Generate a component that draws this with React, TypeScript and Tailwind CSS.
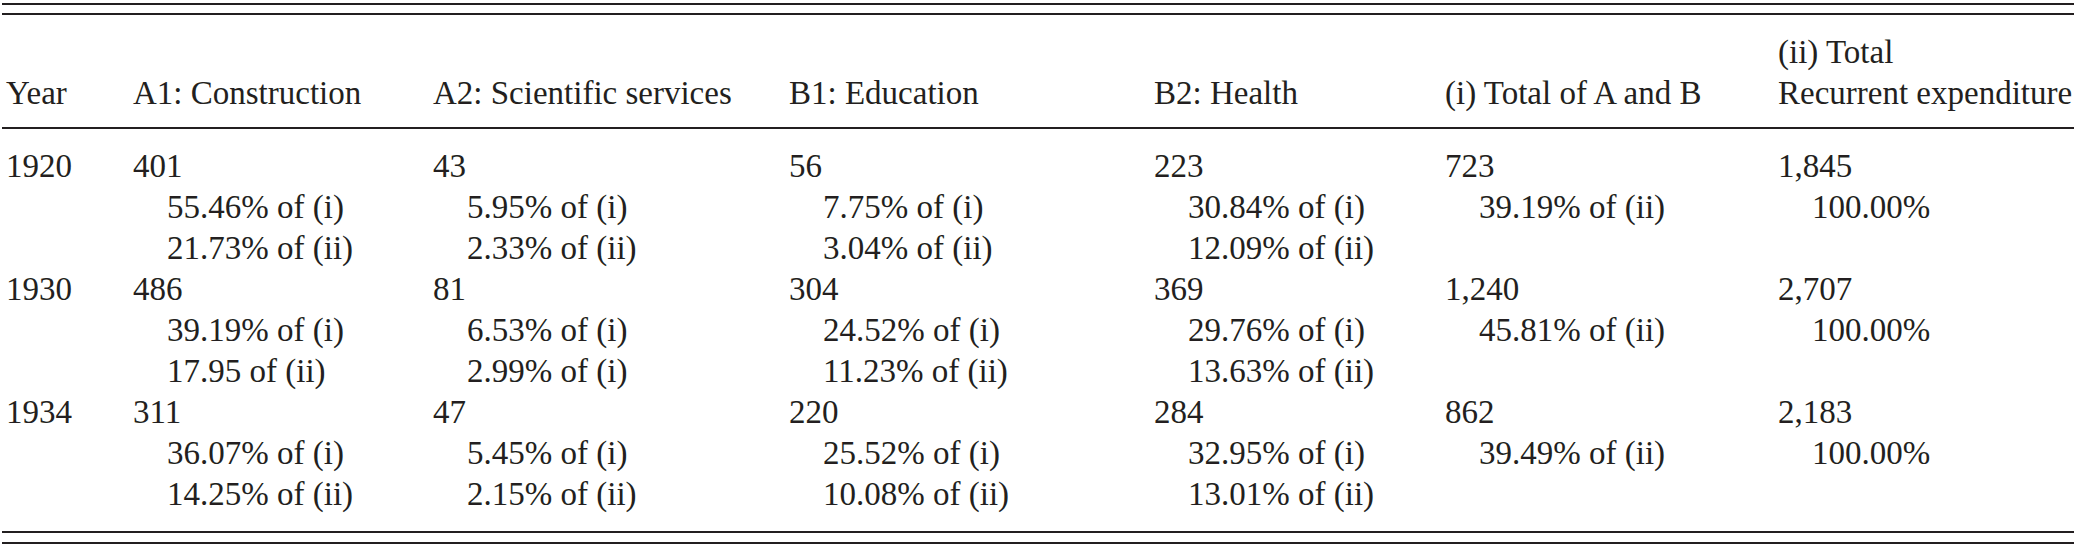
import React from "react";

type Cell = { main: string; subs: string[] };
type Row = { year: string; cells: Cell[] };

const headers: string[][] = [
  ["Year"],
  ["A1: Construction"],
  ["A2: Scientific services"],
  ["B1: Education"],
  ["B2: Health"],
  ["(i) Total of A and B"],
  ["(ii) Total", "Recurrent expenditure"],
];

const rows: Row[] = [
  {
    year: "1920",
    cells: [
      { main: "401", subs: ["55.46% of (i)", "21.73% of (ii)"] },
      { main: "43", subs: ["5.95% of (i)", "2.33% of (ii)"] },
      { main: "56", subs: ["7.75% of (i)", "3.04% of (ii)"] },
      { main: "223", subs: ["30.84% of (i)", "12.09% of (ii)"] },
      { main: "723", subs: ["39.19% of (ii)"] },
      { main: "1,845", subs: ["100.00%"] },
    ],
  },
  {
    year: "1930",
    cells: [
      { main: "486", subs: ["39.19% of (i)", "17.95 of (ii)"] },
      { main: "81", subs: ["6.53% of (i)", "2.99% of (i)"] },
      { main: "304", subs: ["24.52% of (i)", "11.23% of (ii)"] },
      { main: "369", subs: ["29.76% of (i)", "13.63% of (ii)"] },
      { main: "1,240", subs: ["45.81% of (ii)"] },
      { main: "2,707", subs: ["100.00%"] },
    ],
  },
  {
    year: "1934",
    cells: [
      { main: "311", subs: ["36.07% of (i)", "14.25% of (ii)"] },
      { main: "47", subs: ["5.45% of (i)", "2.15% of (ii)"] },
      { main: "220", subs: ["25.52% of (i)", "10.08% of (ii)"] },
      { main: "284", subs: ["32.95% of (i)", "13.01% of (ii)"] },
      { main: "862", subs: ["39.49% of (ii)"] },
      { main: "2,183", subs: ["100.00%"] },
    ],
  },
];

const grid =
  "grid grid-cols-[127px_300px_356px_365px_291px_333px_1fr] pl-[6px]";

export default function App() {
  return (
    <div className="w-[2074px] h-[549px] bg-white font-['Liberation_Serif',serif] text-[33px] leading-[41px] text-[#231f20] overflow-hidden">
      <div className="pt-[3px] pl-[2px]">
        <div className="h-[2px] bg-[#231f20]" />
        <div className="h-[8px]" />
        <div className="h-[2px] bg-[#231f20]" />
      </div>
      <div className={`${grid} items-end pt-[17px] pb-[13px]`}>
        {headers.map((h, i) => (
          <div key={i} className="flex flex-col whitespace-nowrap">
            {h.map((t, j) => (
              <span key={j}>{t}</span>
            ))}
          </div>
        ))}
      </div>
      <div className="pl-[2px]">
        <div className="h-[2px] bg-[#231f20]" />
      </div>
      <div className="flex flex-col pt-[17px] pb-[16px]">
        {rows.map((r) => (
          <div key={r.year} className={`${grid} items-start`}>
            <div className="whitespace-nowrap">{r.year}</div>
            {r.cells.map((c, i) => (
              <div key={i} className="flex flex-col whitespace-nowrap">
                <span>{c.main}</span>
                {c.subs.map((s, j) => (
                  <span key={j} className="pl-[34px]">
                    {s}
                  </span>
                ))}
              </div>
            ))}
          </div>
        ))}
      </div>
      <div className="pl-[2px]">
        <div className="h-[2px] bg-[#231f20]" />
        <div className="h-[9px]" />
        <div className="h-[2px] bg-[#231f20]" />
      </div>
    </div>
  );
}
